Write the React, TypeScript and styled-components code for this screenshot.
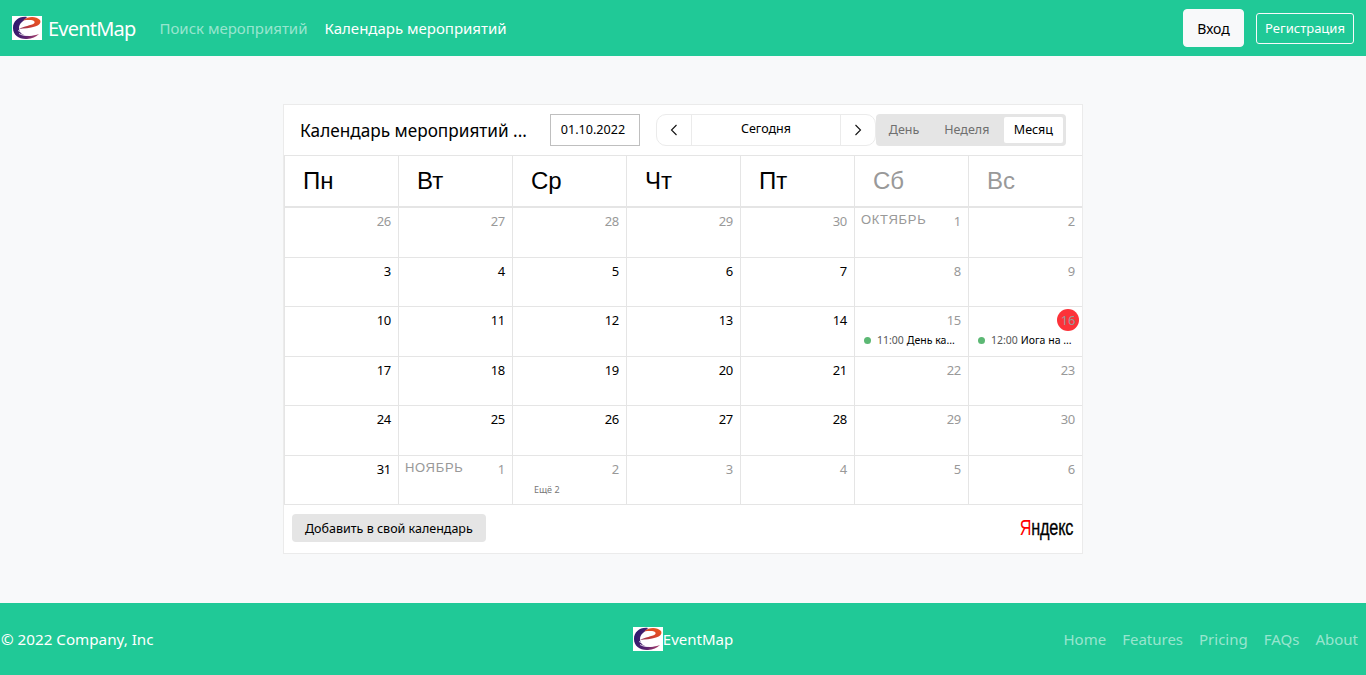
import React from 'react';
import styled, { createGlobalStyle } from 'styled-components';

const GlobalStyle = createGlobalStyle`
    body {
        margin: 0;
        background: #f8f9fa;
        font-family: 'Noto Sans', 'Open Sans', sans-serif;
    }
`;

interface IDay {
    label: number;
    muted?: boolean;
    month?: string;
    today?: boolean;
    event?: string;
    more?: string;
}

const WEEK_DAYS = ['Пн', 'Вт', 'Ср', 'Чт', 'Пт', 'Сб', 'Вс'];

const DAYS: IDay[] = [
    { label: 26, muted: true },
    { label: 27, muted: true },
    { label: 28, muted: true },
    { label: 29, muted: true },
    { label: 30, muted: true },
    { label: 1, muted: true, month: 'ОКТЯБРЬ' },
    { label: 2, muted: true },
    { label: 3 },
    { label: 4 },
    { label: 5 },
    { label: 6 },
    { label: 7 },
    { label: 8, muted: true },
    { label: 9, muted: true },
    { label: 10 },
    { label: 11 },
    { label: 12 },
    { label: 13 },
    { label: 14 },
    { label: 15, muted: true, event: 'День ка...' },
    { label: 16, muted: true, today: true, event: 'Иога на ...' },
    { label: 17 },
    { label: 18 },
    { label: 19 },
    { label: 20 },
    { label: 21 },
    { label: 22, muted: true },
    { label: 23, muted: true },
    { label: 24 },
    { label: 25 },
    { label: 26 },
    { label: 27 },
    { label: 28 },
    { label: 29, muted: true },
    { label: 30, muted: true },
    { label: 31 },
    { label: 1, muted: true, month: 'НОЯБРЬ' },
    { label: 2, muted: true, more: 'Ещё 2' },
    { label: 3, muted: true },
    { label: 4, muted: true },
    { label: 5, muted: true },
    { label: 6, muted: true },
];

const Logo = ({ id }: { id: string }) => (
    <LogoSvg viewBox="0 0 30 24">
        <defs>
            <linearGradient id={`${id}-body`} x1="0" y1="0.5" x2="1" y2="0.8">
                <stop offset="0" stopColor="#2e1a6e" />
                <stop offset="0.55" stopColor="#5a2470" />
                <stop offset="1" stopColor="#b0406a" />
            </linearGradient>
            <linearGradient id={`${id}-top`} x1="0" y1="1" x2="1" y2="0">
                <stop offset="0" stopColor="#8a2c58" />
                <stop offset="0.5" stopColor="#d8452c" />
                <stop offset="1" stopColor="#ea5a1c" />
            </linearGradient>
        </defs>
        <rect width="30" height="24" fill="#fff" />
        <path
            d="M15 1C7 0 1 5 1 12c0 7 6 11.500 14 11 5-.5 9-2 12-5-5 2-13 3-17 0C6 15 6 9 10 6c2-2 4-3 5-5z"
            fill={`url(#${id}-body)`}
        />
        <path
            d="M11 4.500C16 0 24 0 28 4c1.500 3-1 5.500-5 6.500-5 1.500-11 2-16 2.500 5-3 12-3.500 15-5.500 2-2-1-3.500-4-3.500-2.500 0-5 0-7 .5z"
            fill={`url(#${id}-top)`}
        />
        <path
            d="M6 14.500c5 3 13 3 21-.5M7 17.500c5 3 11 2.500 18-.5"
            stroke="#fff"
            strokeWidth="0.8"
            fill="none"
        />
    </LogoSvg>
);

const App = () => (
    <Page>
        <GlobalStyle />
        <NavBar>
            <NavLeft>
                <Brand>
                    <Logo id="nav" />
                    <BrandName>EventMap</BrandName>
                </Brand>
                <NavLink>Поиск мероприятий</NavLink>
                <NavLink $active>Календарь мероприятий</NavLink>
            </NavLeft>
            <NavRight>
                <LoginBtn>Вход</LoginBtn>
                <RegisterBtn>Регистрация</RegisterBtn>
            </NavRight>
        </NavBar>

        <Main>
            <Widget>
                <Toolbar>
                    <WidgetTitle>Календарь мероприятий ...</WidgetTitle>
                    <DateBox>01.10.2022</DateBox>
                    <Pager>
                        <PagerArrow>
                            <Chevron viewBox="0 0 10 14">
                                <path d="M7.500 2 2.500 7 7.500 12" />
                            </Chevron>
                        </PagerArrow>
                        <PagerToday>Сегодня</PagerToday>
                        <PagerArrow>
                            <Chevron viewBox="0 0 10 14">
                                <path d="M2.500 2 7.500 7 2.500 12" />
                            </Chevron>
                        </PagerArrow>
                    </Pager>
                    <Views>
                        <ViewTab>День</ViewTab>
                        <ViewTab>Неделя</ViewTab>
                        <ViewTab $active>Месяц</ViewTab>
                    </Views>
                </Toolbar>

                <WeekHead>
                    {WEEK_DAYS.map((day, i) => (
                        <WeekDay key={day} $weekend={i > 4}>
                            {day}
                        </WeekDay>
                    ))}
                </WeekHead>

                <Grid>
                    {DAYS.map((day, i) => (
                        <Cell key={i}>
                            {day.month && <MonthName>{day.month}</MonthName>}
                            <DayNumber $muted={day.muted} $today={day.today}>
                                {day.label}
                            </DayNumber>
                            {day.event && (
                                <EventRow>
                                    <EventDot />
                                    <EventTime>{day.label === 15 ? '11:00' : '12:00'}</EventTime>
                                    <span>{day.event}</span>
                                </EventRow>
                            )}
                            {day.more && <MoreLink>{day.more}</MoreLink>}
                        </Cell>
                    ))}
                </Grid>

                <WidgetFooter>
                    <AddBtn>Добавить в свой календарь</AddBtn>
                    <YandexLogo>
                        <YandexRed>Я</YandexRed>ндекс
                    </YandexLogo>
                </WidgetFooter>
            </Widget>
        </Main>

        <Footer>
            <Copyright>© 2022 Company, Inc</Copyright>
            <FooterBrand>
                <Logo id="footer" />
                <FooterBrandName>EventMap</FooterBrandName>
            </FooterBrand>
            <FooterLinks>
                <FooterLink>Home</FooterLink>
                <FooterLink>Features</FooterLink>
                <FooterLink>Pricing</FooterLink>
                <FooterLink>FAQs</FooterLink>
                <FooterLink>About</FooterLink>
            </FooterLinks>
        </Footer>
    </Page>
);

export default App;

const Page = styled.div`
    display: flex;
    flex-direction: column;
    min-height: 675px;
`;

const NavBar = styled.nav`
    height: 56px;
    background: #20c997;
    display: flex;
    align-items: center;
    justify-content: space-between;
    padding: 0 12px;
`;

const NavLeft = styled.div`
    display: flex;
    align-items: center;
`;

const Brand = styled.div`
    display: flex;
    align-items: center;
    gap: 6px;
    margin-right: 24px;
`;

const LogoSvg = styled.svg`
    width: 30px;
    height: 24px;
    display: block;
`;

const BrandName = styled.span`
    color: #fff;
    font-size: 20px;
    letter-spacing: -0.8px;
`;

const NavLink = styled.a<{ $active?: boolean }>`
    color: ${({ $active }) => ($active ? '#fff' : 'rgba(255, 255, 255, 0.55)')};
    font-size: 15px;
    margin-right: 17px;
`;

const NavRight = styled.div`
    display: flex;
    align-items: center;
    gap: 12px;
`;

const LoginBtn = styled.button`
    width: 61px;
    height: 38px;
    background: #f8f9fa;
    border: 1px solid #f8f9fa;
    border-radius: 4px;
    color: #000;
    font: 14px 'Noto Sans', sans-serif;
    padding: 0;
`;

const RegisterBtn = styled.button`
    width: 98px;
    height: 31px;
    background: transparent;
    border: 1px solid #f8f9fa;
    border-radius: 3px;
    color: #fff;
    font: 13px 'Noto Sans', sans-serif;
    padding: 0;
`;

const Main = styled.main`
    flex: 1;
    display: flex;
    justify-content: center;
    padding: 48px 0 49px;
`;

const Widget = styled.section`
    width: 800px;
    height: 450px;
    box-sizing: border-box;
    background: #fff;
    border: 1px solid #ebebeb;
    font-family: 'Liberation Sans', Arial, sans-serif;
`;

const Toolbar = styled.div`
    height: 50px;
    display: flex;
    align-items: center;
    padding: 0 16px;
`;

const WidgetTitle = styled.div`
    width: 250px;
    font: 17.2px 'Noto Sans', sans-serif;
    color: #000;
    white-space: nowrap;
`;

const DateBox = styled.div`
    width: 90px;
    height: 32px;
    box-sizing: border-box;
    border: 1px solid #bfbfbf;
    padding-right: 4px;
    font: 12.6px/30px 'Noto Sans', sans-serif;
    text-align: center;
    color: #000;
    margin-right: 16px;
`;

const Pager = styled.div`
    width: 220px;
    height: 32px;
    box-sizing: border-box;
    border: 1px solid #ebebeb;
    border-radius: 10px;
    display: flex;
    align-items: center;
`;

const PagerArrow = styled.div`
    width: 34px;
    height: 100%;
    display: flex;
    align-items: center;
    justify-content: center;
`;

const Chevron = styled.svg`
    width: 10px;
    height: 14px;
    fill: none;
    stroke: #111;
    stroke-width: 1.1;
`;

const PagerToday = styled.div`
    flex: 1;
    height: 100%;
    box-sizing: border-box;
    border-left: 1px solid #ebebeb;
    border-right: 1px solid #ebebeb;
    font: 12.5px/28px 'Noto Sans', sans-serif;
    text-align: center;
    color: #000;
`;

const Views = styled.div`
    height: 32px;
    width: 190px;
    box-sizing: border-box;
    background: #e5e5e5;
    border-radius: 4px;
    padding: 3px;
    display: flex;
    justify-content: flex-end;
`;

const ViewTab = styled.div<{ $active?: boolean }>`
    padding: 0 ${({ $active }) => ($active ? '10px' : '12.5px')};
    margin-left: ${({ $active }) => ($active ? '2px' : '0')};
    font: 12.5px/26px 'Noto Sans', sans-serif;
    color: ${({ $active }) => ($active ? '#000' : '#6f6f6f')};
    background: ${({ $active }) => ($active ? '#fff' : 'transparent')};
    border-radius: 2px;
`;

const WeekHead = styled.div`
    display: grid;
    grid-template-columns: repeat(7, 114px);
    height: 53px;
    box-sizing: border-box;
    border-top: 1px solid #e5e5e5;
    border-bottom: 2px solid #e5e5e5;
`;

const WeekDay = styled.div<{ $weekend?: boolean }>`
    border-left: 1px solid #e5e5e5;
    padding-left: 18px;
    font-size: 24px;
    line-height: 49px;
    color: ${({ $weekend }) => ($weekend ? '#999' : '#000')};
`;

const Grid = styled.div`
    display: grid;
    grid-template-columns: repeat(7, 114px);
    grid-template-rows: 50px 49px 50px 49px 50px 49px;
`;

const Cell = styled.div`
    box-sizing: border-box;
    border-left: 1px solid #e5e5e5;
    border-bottom: 1px solid #e5e5e5;
    padding: 5px 7px 0 6px;
    display: flex;
    flex-wrap: wrap;
    justify-content: flex-end;
    align-content: flex-start;
`;

const MonthName = styled.span`
    font-size: 13px;
    line-height: 14px;
    letter-spacing: 0.7px;
    color: #999;
    margin-right: auto;
`;

const DayNumber = styled.span<{ $muted?: boolean; $today?: boolean }>`
    font: 13px/16px 'Noto Sans', sans-serif;
    letter-spacing: -0.3px;
    color: ${({ $muted }) => ($muted ? '#999' : '#000')};
    ${({ $today }) =>
        $today &&
        `
        width: 22px;
        height: 22px;
        margin: -3px -4px -3px 0;
        border-radius: 50%;
        background: #fc3239;
        line-height: 22px;
        text-align: center;
    `}
`;

const EventRow = styled.div`
    width: 100%;
    display: flex;
    align-items: center;
    font: 10.5px/12px 'Noto Sans', sans-serif;
    color: #000;
    margin-top: 6px;
    padding-left: 3px;
    white-space: nowrap;
`;

const EventDot = styled.span`
    width: 7px;
    height: 7px;
    border-radius: 50%;
    background: #5cb874;
    margin-right: 6px;
`;

const EventTime = styled.span`
    color: #555;
    margin-right: 3px;
`;

const MoreLink = styled.div`
    width: 100%;
    font: 9px/12px 'Noto Sans', sans-serif;
    color: #777;
    margin-top: 7px;
    padding-left: 15px;
`;

const WidgetFooter = styled.div`
    height: 48px;
    box-sizing: border-box;
    padding: 0 8px 2px;
    display: flex;
    align-items: center;
    justify-content: space-between;
`;

const AddBtn = styled.button`
    height: 28px;
    padding: 0 13px;
    background: #e5e5e5;
    border: 0;
    border-radius: 4px;
    color: #000;
    font: 12.5px 'Noto Sans', sans-serif;
`;

const YandexLogo = styled.div`
    font: 400 22px 'Liberation Sans', sans-serif;
    color: #000;
    transform: scaleX(0.74);
    transform-origin: right center;
    margin-right: 1px;
    letter-spacing: -0.3px;
    -webkit-text-stroke: 0.3px #000;
`;

const YandexRed = styled.span`
    color: #f00;
    -webkit-text-stroke: 0;
`;

const Footer = styled.footer`
    height: 72px;
    background: #20c997;
    display: grid;
    grid-template-columns: 1fr 1fr 1fr;
    align-items: center;
    color: #fff;
    font-size: 15px;
`;

const Copyright = styled.span`
    padding-left: 1px;
    font-size: 15.2px;
`;

const FooterBrand = styled.div`
    display: flex;
    align-items: center;
    justify-content: center;
`;

const FooterBrandName = styled.span`
    font-size: 15px;
`;

const FooterLinks = styled.div`
    display: flex;
    justify-content: flex-end;
    gap: 16px;
    padding-right: 8px;
`;

const FooterLink = styled.a`
    color: rgba(255, 255, 255, 0.55);
`;
